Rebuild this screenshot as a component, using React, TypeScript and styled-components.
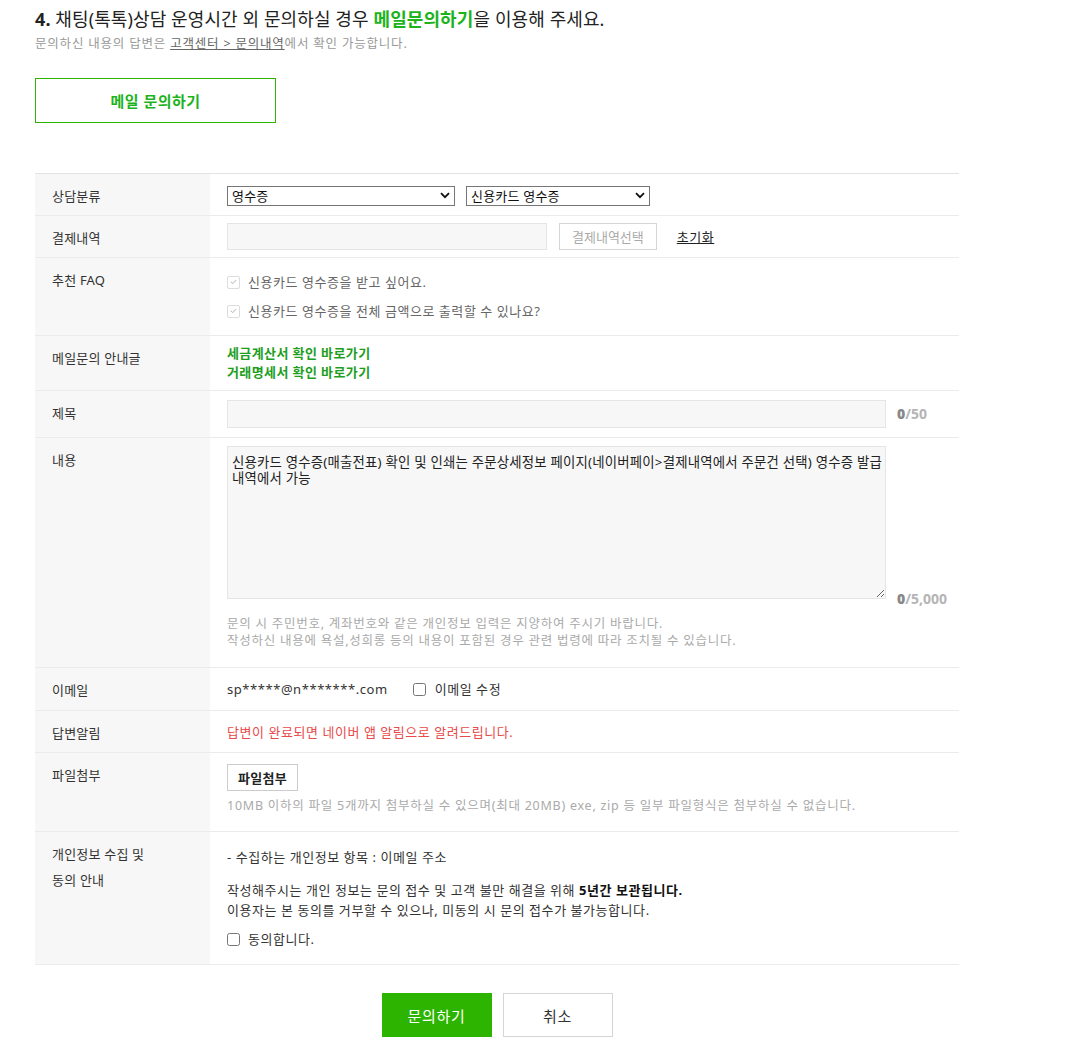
import React from "react";
import styled, { createGlobalStyle } from "styled-components";

const GlobalStyle = createGlobalStyle`
  html, body { margin: 0; padding: 0; background: #fff; }
  body {
    font-family: "Noto Sans", "Noto Sans CJK KR", sans-serif;
    color: #333;
    -webkit-font-smoothing: antialiased;
  }
  * { box-sizing: border-box; }
`;

const Page = styled.div`
  width: 959px;
  padding: 7px 0 12px 35px;
`;

const Heading = styled.h3`
  margin: 0;
  font-size: 18px;
  font-weight: 400;
  line-height: 24px;
  color: #222;
  letter-spacing: 0.1px;
  b { font-weight: 700; }
`;

const Green = styled.b`
  color: #1db31d;
`;

const SubText = styled.p`
  margin: 4px 0 0;
  font-size: 12.5px;
  line-height: 18px;
  color: #999;
  letter-spacing: 0.8px;
  a { color: #666; text-decoration: underline; }
`;

const MailButton = styled.button`
  display: block;
  margin-top: 25px;
  width: 241px;
  height: 45px;
  border: 1px solid #2db400;
  background: #fff;
  color: #1db31d;
  font-family: inherit;
  font-size: 15px;
  font-weight: 700;
  letter-spacing: 0.5px;
  cursor: pointer;
`;

const Table = styled.div`
  margin-top: 50px;
  border-top: 1px solid #e3e3e3;
`;

const Row = styled.div`
  display: grid;
  grid-template-columns: 175px 1fr;
  border-bottom: 1px solid #ebebeb;
`;

const Label = styled.div`
  background: #f7f7f7;
  padding: 9px 17px 6px;
  font-size: 13px;
  line-height: 26px;
  color: #333;
  letter-spacing: 0.2px;
`;

const Cell = styled.div<{ $pad: string }>`
  padding: ${(p) => p.$pad};
  padding-left: 17px;
  font-size: 13px;
  line-height: 20px;
  color: #333;
  letter-spacing: 0.55px;
  min-width: 0;
`;

const Inline = styled.div<{ $gap?: number }>`
  display: flex;
  align-items: center;
  gap: ${(p) => p.$gap ?? 11}px;
`;

const SelectWrap = styled.div<{ $w: number }>`
  position: relative;
  width: ${(p) => p.$w}px;
  height: 20px;
`;

const Select = styled.select`
  appearance: none;
  width: 100%;
  height: 20px;
  border: 1px solid #767676;
  border-radius: 0;
  background: #fff;
  padding: 0 20px 0 4px;
  font-family: inherit;
  font-size: 13px;
  line-height: 18px;
  color: #111;
  letter-spacing: 0.2px;
`;

const Chevron = styled.svg`
  position: absolute;
  right: 5px;
  top: 6px;
  pointer-events: none;
`;

const GrayInput = styled.div<{ $w: number; $h: number }>`
  width: ${(p) => p.$w}px;
  height: ${(p) => p.$h}px;
  background: #f7f7f7;
  border: 1px solid #e5e5e5;
  flex: none;
`;

const GhostButton = styled.button`
  height: 27px;
  padding: 0 12px;
  border: 1px solid #d5d5d5;
  background: #fff;
  color: #aaa;
  font-family: inherit;
  font-size: 13px;
  letter-spacing: 0;
  margin-left: 1px;
`;

const TextLink = styled.a`
  color: #222;
  text-decoration: underline;
  margin-left: 9px;
  font-size: 13px;
`;

const FaqList = styled.div`
  display: flex;
  flex-direction: column;
  gap: 9px;
`;

const FaqItem = styled.label`
  display: flex;
  align-items: center;
  gap: 8px;
  color: #666;
`;

const DisabledCheck = styled.span`
  width: 13px;
  height: 13px;
  border: 1px solid #dcdcdc;
  border-radius: 2px;
  background: #fff;
  display: inline-flex;
  align-items: center;
  justify-content: center;
  flex: none;
`;

const GuideLink = styled.a`
  display: block;
  color: #1e9e1e;
  font-weight: 700;
  line-height: 19px;
  letter-spacing: 0.4px;
  text-decoration: none;
`;

const FieldRow = styled.div`
  display: flex;
  align-items: flex-end;
  gap: 11px;
`;

const Counter = styled.span<{ $center?: boolean }>`
  align-self: ${(p) => (p.$center ? "center" : "flex-end")};
  margin-bottom: ${(p) => (p.$center ? "0" : "-8px")};
  font-size: 14px;
  font-weight: 700;
  color: #b5b5b5;
  letter-spacing: 0;
  line-height: 16px;
  b { color: #888; }
`;

const TextArea = styled.textarea`
  width: 659px;
  height: 153px;
  background: #f7f7f7;
  border: 1px solid #e5e5e5;
  padding: 7px 2px 7px 4px;
  font-family: inherit;
  font-size: 13.4px;
  line-height: 16px;
  color: #222;
  letter-spacing: 0.2px;
  resize: vertical;
  flex: none;
`;

const Note = styled.p<{ $mt: number }>`
  margin: ${(p) => p.$mt}px 0 0;
  font-size: 12.5px;
  line-height: 17px;
  color: #aaa;
  letter-spacing: 0.75px;
`;

const CheckLabel = styled.label<{ $gap?: number }>`
  display: inline-flex;
  align-items: center;
  gap: ${(p) => p.$gap ?? 8}px;
  color: #333;
`;

const Checkbox = styled.input.attrs({ type: "checkbox" })`
  width: 13px;
  height: 13px;
  margin: 0;
  flex: none;
`;

const Alert = styled.span`
  color: #e84a4a;
`;

const FileButton = styled.button`
  display: block;
  height: 27px;
  padding: 0 10px;
  border: 1px solid #ccc;
  background: #fff;
  color: #222;
  font-family: inherit;
  font-size: 13px;
  font-weight: 700;
  letter-spacing: 0.3px;
`;

const Para = styled.p<{ $mt: number }>`
  margin: ${(p) => p.$mt}px 0 0;
  line-height: 20px;
  b { font-weight: 700; color: #111; }
`;

const AgreeRow = styled.div`
  display: flex;
  align-items: center;
  height: 20px;
  margin-top: 9px;
`;

const Actions = styled.div`
  display: flex;
  justify-content: center;
  gap: 11px;
  margin-top: 28px;
`;

const ActionButton = styled.button<{ $primary?: boolean }>`
  width: 110px;
  height: 44px;
  border: 1px solid ${(p) => (p.$primary ? "#2db400" : "#d5d5d5")};
  background: ${(p) => (p.$primary ? "#2db400" : "#fff")};
  color: ${(p) => (p.$primary ? "#fff" : "#333")};
  font-family: inherit;
  font-size: 15px;
  letter-spacing: 0.7px;
`;

const ChevronIcon = () => (
  <Chevron width="10" height="7" viewBox="0 0 10 7">
    <path d="M1 1.2 L5 5.2 L9 1.2" fill="none" stroke="#111" strokeWidth="1.8" />
  </Chevron>
);

const GrayCheck = () => (
  <DisabledCheck>
    <svg width="7" height="6" viewBox="0 0 7 6">
      <path d="M0.8 2.8 L2.8 4.6 L6.2 1" fill="none" stroke="#b5b5b5" strokeWidth="1" />
    </svg>
  </DisabledCheck>
);

export default function App() {
  return (
    <>
      <GlobalStyle />
      <Page>
        <Heading>
          <b>4.</b> 채팅(톡톡)상담 운영시간 외 문의하실 경우 <Green>메일문의하기</Green>을 이용해 주세요.
        </Heading>
        <SubText>
          문의하신 내용의 답변은 <a>고객센터 &gt; 문의내역</a>에서 확인 가능합니다.
        </SubText>
        <MailButton>메일 문의하기</MailButton>

        <Table>
          <Row>
            <Label>상담분류</Label>
            <Cell $pad="12px 17px 9px">
              <Inline>
                <SelectWrap $w={228}>
                  <Select defaultValue="a">
                    <option value="a">영수증</option>
                  </Select>
                  <ChevronIcon />
                </SelectWrap>
                <SelectWrap $w={184}>
                  <Select defaultValue="b">
                    <option value="b">신용카드 영수증</option>
                  </Select>
                  <ChevronIcon />
                </SelectWrap>
              </Inline>
            </Cell>
          </Row>

          <Row>
            <Label>결제내역</Label>
            <Cell $pad="7px 17px 6px">
              <Inline>
                <GrayInput $w={320} $h={27} />
                <GhostButton>결제내역선택</GhostButton>
                <TextLink>초기화</TextLink>
              </Inline>
            </Cell>
          </Row>

          <Row>
            <Label>추천 FAQ</Label>
            <Cell $pad="14px 17px 14px">
              <FaqList>
                <FaqItem>
                  <GrayCheck />
                  신용카드 영수증을 받고 싶어요.
                </FaqItem>
                <FaqItem>
                  <GrayCheck />
                  신용카드 영수증을 전체 금액으로 출력할 수 있나요?
                </FaqItem>
              </FaqList>
            </Cell>
          </Row>

          <Row>
            <Label>메일문의 안내글</Label>
            <Cell $pad="8px 17px 8px">
              <GuideLink>세금계산서 확인 바로가기</GuideLink>
              <GuideLink>거래명세서 확인 바로가기</GuideLink>
            </Cell>
          </Row>

          <Row>
            <Label>제목</Label>
            <Cell $pad="9px 17px 9px">
              <FieldRow>
                <GrayInput $w={659} $h={28} />
                <Counter $center>
                  <b>0</b>/50
                </Counter>
              </FieldRow>
            </Cell>
          </Row>

          <Row>
            <Label>내용</Label>
            <Cell $pad="8px 17px 18px">
              <FieldRow>
                <TextArea
                  readOnly
                  value="신용카드 영수증(매출전표) 확인 및 인쇄는 주문상세정보 페이지(네이버페이>결제내역에서 주문건 선택) 영수증 발급내역에서 가능"
                />
                <Counter>
                  <b>0</b>/5,000
                </Counter>
              </FieldRow>
              <Note $mt={16}>
                문의 시 주민번호, 계좌번호와 같은 개인정보 입력은 지양하여 주시기 바랍니다.
                <br />
                작성하신 내용에 욕설,성희롱 등의 내용이 포함된 경우 관련 법령에 따라 조치될 수 있습니다.
              </Note>
            </Cell>
          </Row>

          <Row>
            <Label>이메일</Label>
            <Cell $pad="11px 17px 11px">
              <Inline $gap={25}>
                <span>sp*****@n*******.com</span>
                <CheckLabel $gap={9}>
                  <Checkbox />
                  이메일 수정
                </CheckLabel>
              </Inline>
            </Cell>
          </Row>

          <Row>
            <Label>답변알림</Label>
            <Cell $pad="11px 17px 10px">
              <Alert>답변이 완료되면 네이버 앱 알림으로 알려드립니다.</Alert>
            </Cell>
          </Row>

          <Row>
            <Label>파일첨부</Label>
            <Cell $pad="11px 17px 17px">
              <FileButton>파일첨부</FileButton>
              <Note $mt={6}>
                10MB 이하의 파일 5개까지 첨부하실 수 있으며(최대 20MB) exe, zip 등 일부 파일형식은 첨부하실 수 없습니다.
              </Note>
            </Cell>
          </Row>

          <Row>
            <Label>
              개인정보 수집 및
              <br />
              동의 안내
            </Label>
            <Cell $pad="15px 17px 15px">
              <Para $mt={0}>- 수집하는 개인정보 항목 : 이메일 주소</Para>
              <Para $mt={13}>
                작성해주시는 개인 정보는 문의 접수 및 고객 불만 해결을 위해 <b>5년간 보관됩니다.</b>
                <br />
                이용자는 본 동의를 거부할 수 있으나, 미동의 시 문의 접수가 불가능합니다.
              </Para>
              <AgreeRow>
                <CheckLabel>
                  <Checkbox />
                  동의합니다.
                </CheckLabel>
              </AgreeRow>
            </Cell>
          </Row>
        </Table>

        <Actions>
          <ActionButton $primary>문의하기</ActionButton>
          <ActionButton>취소</ActionButton>
        </Actions>
      </Page>
    </>
  );
}
